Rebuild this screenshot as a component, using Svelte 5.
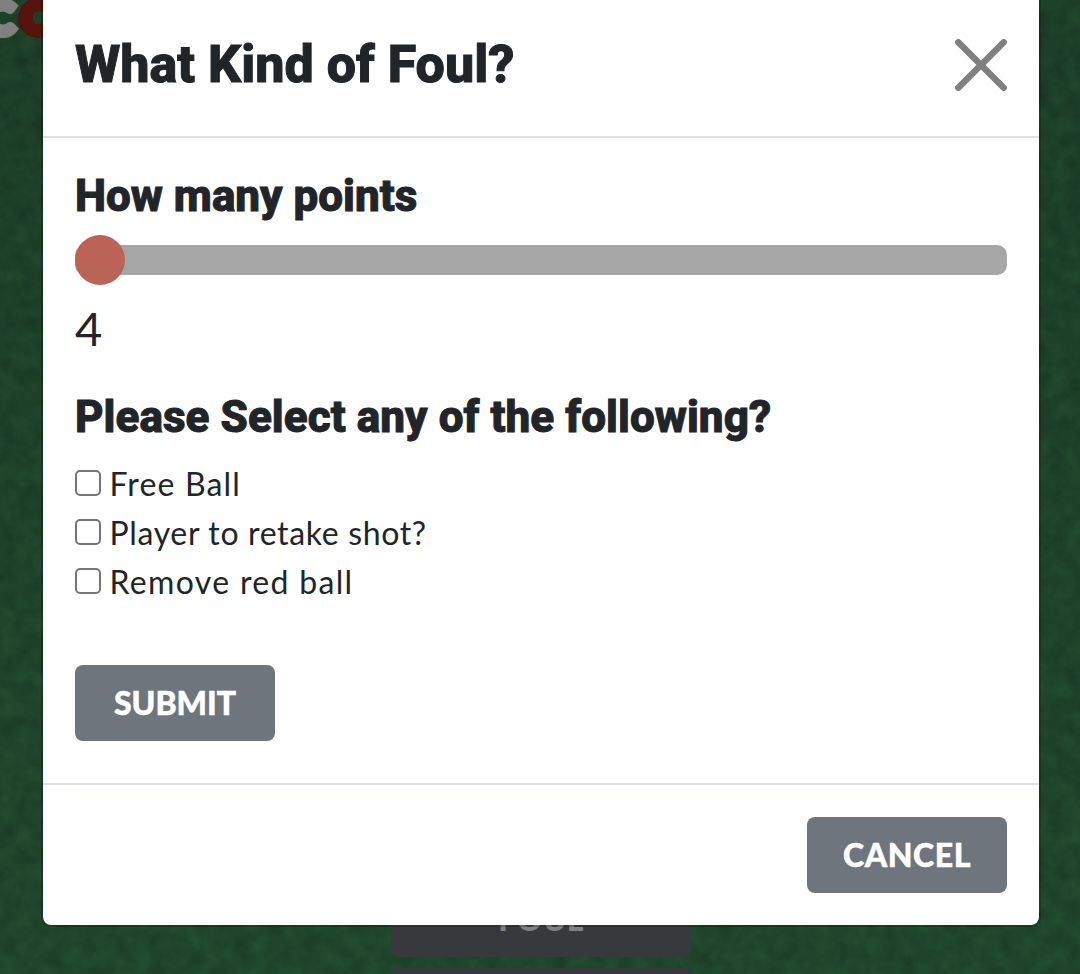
<script>
  let points = $state(4);
  const options = $state([
    { id: 'free', label: 'Free Ball', checked: false },
    { id: 'retake', label: 'Player to retake shot?', checked: false },
    { id: 'remove', label: 'Remove red ball', checked: false }
  ]);
</script>

<div class="page">
  <svg class="felt" width="1080" height="974" aria-hidden="true">
    <filter id="grain" x="0" y="0" width="100%" height="100%" color-interpolation-filters="sRGB">
      <feTurbulence type="fractalNoise" baseFrequency="0.06" numOctaves="3" seed="8" />
      <feColorMatrix values="0.04 0.03 0 0 0.085  0.09 0.05 0 0 0.195  0.05 0.03 0 0 0.127  0 0 0 0 1" />
    </filter>
    <rect width="1080" height="974" filter="url(#grain)" />
  </svg>
  <div class="shade"></div>

  <div class="logo"><span class="grey">C</span><span class="red">O</span></div>

  <div class="stack">
    <div class="dim first">FOUL</div>
    <div class="dim"></div>
  </div>

  <div class="modal">
    <header>
      <h1>What Kind of Foul?</h1>
      <button class="close" aria-label="Close">
        <svg width="52" height="52" viewBox="0 0 52 52"><path d="M3.3 3.3 48.7 48.7M48.7 3.3 3.3 48.7" stroke="#808080" stroke-width="6.5" stroke-linecap="round" /></svg>
      </button>
    </header>
    <section>
      <h2 class="points">How many points</h2>
      <input class="slider" type="range" min="4" max="7" bind:value={points} />
      <p class="value">{points}</p>
      <h2 class="select">Please Select any of the following?</h2>
      <div class="options">
        {#each options as o (o.id)}
          <label class={o.id}><input type="checkbox" bind:checked={o.checked} /><span>{o.label}</span></label>
        {/each}
      </div>
      <button class="btn submit">SUBMIT</button>
    </section>
    <footer><button class="btn cancel">CANCEL</button></footer>
  </div>
</div>

<style>
  :global(body) { margin: 0; overflow: hidden; }
  * { box-sizing: border-box; }
  .page { position: relative; width: 1080px; height: 974px; overflow: hidden; background: #1e432b; color: #212529; font-family: Lato, sans-serif; }
  .felt { position: absolute; inset: 0; }
  .shade { position: absolute; inset: 0; background: linear-gradient(rgba(0, 0, 0, .08), rgba(40, 100, 60, .08)); }
  .logo { position: absolute; left: -15px; top: -9px; display: flex; font: 900 44px/52px Lato, sans-serif; }
  .grey { width: 36px; color: #808080; -webkit-text-stroke: 8px #808080; }
  .red { color: #56120d; -webkit-text-stroke: 8px #56120d; }
  .stack { position: absolute; left: 391px; top: 881px; width: 300px; display: grid; gap: 11px; }
  .dim { height: 76px; border-radius: 8px; background: #373a3d; color: #808080; font: 900 32px/76px Lato, sans-serif; letter-spacing: .3px; text-align: center; }
  .modal { position: absolute; left: 43px; top: -8px; width: 996px; height: 933px; display: flex; flex-direction: column; background: #fff; border-radius: 8px; box-shadow: 0 0 0 2px rgba(0, 0, 0, .2); }
  header { height: 146px; padding: 2px 32px 0; display: flex; justify-content: space-between; align-items: center; border-bottom: 2px solid #dee2e6; }
  h1, h2 { margin: 0; font-family: Roboto, sans-serif; font-weight: 800; white-space: nowrap; -webkit-text-stroke: 1px #212529; }
  h1 { font-size: 52px; line-height: 62px; }
  h2 { font-size: 44px; line-height: 52px; }
  button { border: 0; padding: 0; }
  .close { width: 52px; height: 52px; background: none; }
  .close svg { display: block; }
  section { height: 647px; padding: 32px 32px 0; border-bottom: 2px solid #dee2e6; }
  .slider { display: block; appearance: none; width: 932px; height: 30px; margin: 23px 0 0; border-radius: 10px; background: #a6a6a6; outline: none; }
  .slider::-webkit-slider-thumb { appearance: none; width: 50px; height: 50px; border-radius: 50%; background: #bc6358; }
  .value { margin: 25px 0 0; font-size: 47px; line-height: 56px; letter-spacing: -1px; }
  .select { margin-top: 35px; letter-spacing: .06px; }
  .options { margin-top: 16px; }
  label { display: flex; align-items: center; height: 49px; font-size: 32px; line-height: 49px; white-space: nowrap; }
  label input { appearance: none; width: 26px; height: 26px; margin: -2px 8.5px 0 0; border: 2px solid #767676; border-radius: 5px; background: #fff; }
  .free { letter-spacing: 1.15px; }
  .retake { letter-spacing: .65px; }
  .remove { letter-spacing: 1.33px; }
  .btn { display: block; width: 200px; height: 76px; border-radius: 8px; background: #6e757d; color: #fff; font: 900 32px/76px Lato, sans-serif; -webkit-text-stroke: .5px #fff; }
  .submit { margin-top: 59px; }
  .cancel { letter-spacing: .6px; }
  footer { padding: 32px; display: flex; justify-content: flex-end; }
</style>
